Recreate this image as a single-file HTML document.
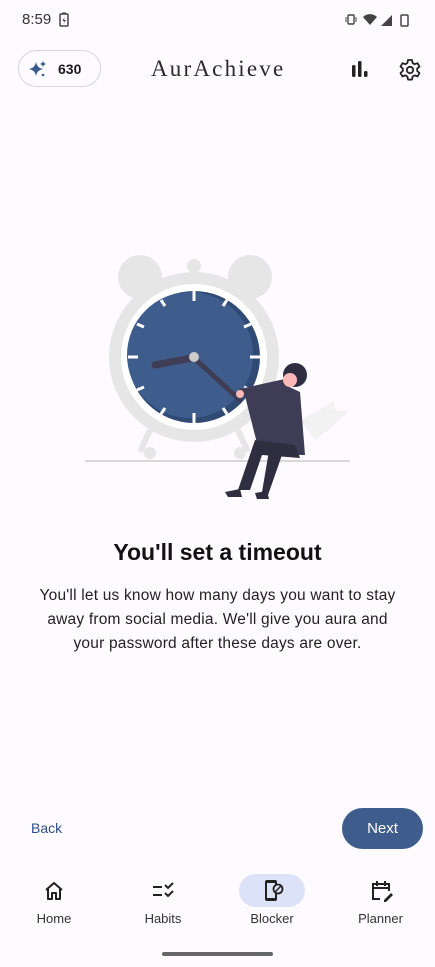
<!DOCTYPE html>
<html><head><meta charset="utf-8"><style>
body{margin:0;width:435px;height:967px;background:#fdfbff;font-family:"Liberation Sans",sans-serif;position:relative;overflow:hidden;color:#1b1b1f}
.a{position:absolute}
</style></head><body>
<div class="a" style="left:22px;top:11px;font-size:15px;color:#333">8:59</div>
<svg class="a" style="left:58px;top:12px" width="12" height="16"><rect x="2" y="2" width="8" height="12" rx="1" fill="none" stroke="#444" stroke-width="1.5"/><rect x="4" y="0.5" width="4" height="2" fill="#444"/><path d="M6.5 5L4.5 9h2l-1 3 2.5-4h-2z" fill="#444"/></svg>
<svg class="a" style="left:345px;top:12px" width="70" height="16"><rect x="3" y="3" width="6" height="9" rx="1" fill="none" stroke="#444" stroke-width="1.4"/><path d="M1 5v5M11 5v5" stroke="#444"/><path d="M18 5a10 10 0 0 1 14 0l-7 8z" fill="#444"/><path d="M36 14L47 3v11z" fill="#444"/><rect x="56" y="3" width="7" height="11" rx="1" fill="none" stroke="#444" stroke-width="1.5"/></svg>
<div class="a" style="left:18px;top:50px;width:83px;height:37px;border:1px solid #d5d5dc;border-radius:19px;box-sizing:border-box"></div>
<svg class="a" style="left:28px;top:60px" width="20" height="18"><path d="M8 2Q9 8 15 9Q9 10 8 16Q7 10 1 9Q7 8 8 2z" fill="#3b5a8c"/><path d="M15 1l1 2 2 1-2 1-1 2-1-2-2-1 2-1z" fill="#3b5a8c"/><circle cx="15" cy="15" r="1.3" fill="#3b5a8c"/></svg>
<div class="a" style="left:58px;top:61px;font-size:14px;font-weight:bold">630</div>
<div class="a" style="left:151px;top:56px;font-family:'Liberation Serif',serif;font-size:23px;letter-spacing:2.2px;color:#2a2a30">AurAchieve</div>
<svg class="a" style="left:350px;top:60px" width="20" height="18"><rect x="2" y="5" width="3.5" height="12" rx="1.5" fill="#222"/><rect x="8" y="1" width="3.5" height="16" rx="1.5" fill="#222"/><rect x="14" y="11" width="3.5" height="6" rx="1.5" fill="#222"/></svg>
<svg class="a" style="left:398px;top:58px" width="24" height="24" viewBox="0 0 24 24"><path d="M10 2h4l.6 3 2 1.2 2.9-1 2 3.4-2.3 2v2.4l2.3 2-2 3.4-2.9-1-2 1.2-.6 3h-4l-.6-3-2-1.2-2.9 1-2-3.4 2.3-2v-2.4l-2.3-2 2-3.4 2.9 1 2-1.2z" fill="none" stroke="#222" stroke-width="1.8" stroke-linejoin="round"/><circle cx="12" cy="12" r="3.2" fill="none" stroke="#222" stroke-width="1.8"/></svg>

<svg class="a" style="left:0;top:240px" width="435" height="270">
<circle cx="140" cy="37" r="22" fill="#e6e6e6"/><circle cx="250" cy="37" r="22" fill="#e6e6e6"/>
<circle cx="194" cy="26" r="7" fill="#e6e6e6"/>
<path d="M150 190L140 212M238 190L248 212" stroke="#e6e6e6" stroke-width="6"/>
<circle cx="150" cy="213" r="6" fill="#e6e6e6"/><circle cx="240" cy="213" r="6" fill="#e6e6e6"/>
<circle cx="194" cy="117" r="85" fill="#e6e6e6"/>
<circle cx="194" cy="117" r="73" fill="#fff"/>
<circle cx="194" cy="117" r="66" fill="#2f4a75"/>
<circle cx="190" cy="115" r="63" fill="#3e5d8c"/>
<g stroke="#fff" stroke-width="3"><path d="M194 51v10M194 173v10M128 117h10M250 117h10M161 60l4 6M227 60l-4 6M137 84l7 3M251 84l-7 3M137 150l7-3M251 150l-7-3M161 174l4-6M227 174l-4-6"/></g>
<path d="M155 125L192 118" stroke="#3f3d56" stroke-width="7" stroke-linecap="round"/>
<path d="M194 118L240 160" stroke="#3f3d56" stroke-width="5" stroke-linecap="round"/>
<circle cx="194" cy="117" r="5" fill="#ccc"/>
<path d="M300 180q20-10 35-20q-5 15 15 10q-20 20-35 30z" fill="#f2f2f2"/>
<line x1="85" y1="221" x2="350" y2="221" stroke="#ccc" stroke-width="1.5"/>
<path d="M245 156L285 145L300 152L305 215L260 215z" fill="#3f3d56"/>
<path d="M240 153l45-10" stroke="#3f3d56" stroke-width="8"/>
<circle cx="295" cy="135" r="12" fill="#2f2e41"/><circle cx="290" cy="140" r="7" fill="#ffb8b8"/>
<path d="M295 205L255 200L238 250L250 250L262 215L300 218z" fill="#2f2e41"/>
<path d="M270 205L262 252L268 255L282 215z" fill="#2f2e41"/>
<path d="M225 252l15-3 2 8h-14zM255 253l12-2 2 8h-12z" fill="#2f2e41"/>
<circle cx="240" cy="154" r="4" fill="#ffb8b8"/>
</svg>

<div class="a" style="left:0;width:435px;top:539px;text-align:center;font-size:23px;font-weight:bold;color:#111">You'll set a timeout</div>
<div class="a" style="left:36px;width:363px;top:584px;text-align:center;font-size:15.5px;letter-spacing:0.2px;line-height:24px;color:#222">You'll let us know how many days you want to stay away from social media. We'll give you aura and your password after these days are over.</div>

<div class="a" style="left:31px;top:820px;font-size:14px;color:#2f4f87">Back</div>
<div class="a" style="left:342px;top:808px;width:81px;height:41px;border-radius:21px;background:#3e5d8c;color:#fff;font-size:15px;text-align:center;line-height:41px">Next</div>

<svg class="a" style="left:43px;top:880px" width="22" height="22" viewBox="0 0 22 22"><path d="M3 10L11 3l8 7M5 9v10h4v-6h4v6h4V9" fill="none" stroke="#222" stroke-width="2" stroke-linejoin="round"/></svg>
<svg class="a" style="left:151px;top:880px" width="26" height="22"><path d="M2 7h9M2 15h9" stroke="#222" stroke-width="2"/><path d="M14 5l3 3 5-5M14 13l3 3 5-5" fill="none" stroke="#222" stroke-width="2"/></svg>
<div class="a" style="left:239px;top:874px;width:66px;height:33px;border-radius:17px;background:#dce2f8"></div>
<svg class="a" style="left:262px;top:879px" width="22" height="24"><rect x="3" y="1" width="12" height="21" rx="2" fill="#222"/><rect x="5" y="4" width="8" height="15" fill="#dce2f8"/><circle cx="16" cy="10" r="4.5" fill="#dce2f8" stroke="#222" stroke-width="1.8"/><path d="M13 13l6-6" stroke="#222" stroke-width="1.5"/></svg>
<svg class="a" style="left:370px;top:879px" width="24" height="24"><path d="M10 20H3V5h16v7M3 9h16M7 2v5M15 2v5" fill="none" stroke="#222" stroke-width="2"/><path d="M14 21l7-7 2 2-7 7h-2z" fill="#222"/></svg>
<div class="a" style="left:0;width:108px;top:911px;text-align:center;font-size:13px;color:#333">Home</div>
<div class="a" style="left:108px;width:110px;top:911px;text-align:center;font-size:13px;color:#333">Habits</div>
<div class="a" style="left:218px;width:108px;top:911px;text-align:center;font-size:13px;color:#333">Blocker</div>
<div class="a" style="left:326px;width:109px;top:911px;text-align:center;font-size:13px;color:#333">Planner</div>
<div class="a" style="left:162px;top:952px;width:111px;height:4px;border-radius:2px;background:#666"></div>
</body></html>
